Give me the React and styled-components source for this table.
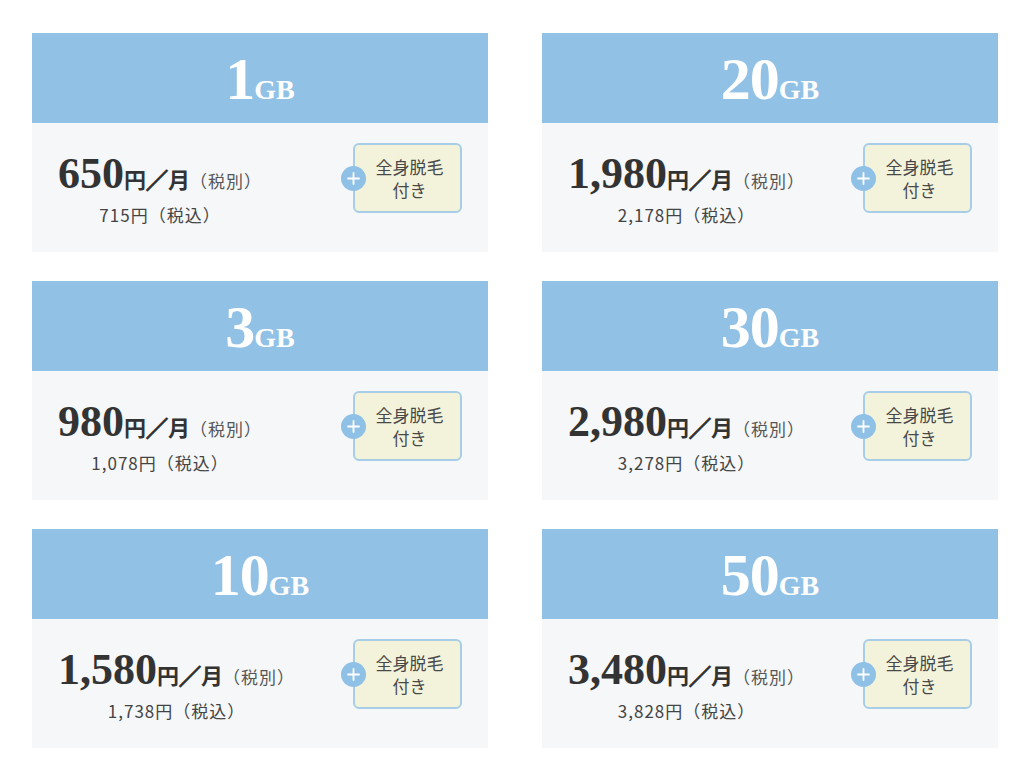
import React from "react";
import styled, { createGlobalStyle } from "styled-components";

const Global = createGlobalStyle`
  html, body { margin: 0; padding: 0; background: #ffffff; }
  body { font-family: "Noto Sans CJK JP", "Noto Sans", sans-serif; color: #333; }
`;

const Page = styled.div`
  width: 1029px;
  box-sizing: border-box;
  padding: 33px 31px 0 32px;
  display: grid;
  grid-template-columns: 456px 456px;
  column-gap: 54px;
  row-gap: 29px;
`;

const Card = styled.section`
  display: flex;
  flex-direction: column;
`;

const Header = styled.div`
  height: 90px;
  box-sizing: border-box;
  padding-top: 3px;
  background: #92c1e6;
  text-align: center;
  color: #ffffff;
  font-family: "Liberation Serif", "DejaVu Serif", serif;
  font-weight: bold;
  font-size: 60px;
  line-height: 86px;
  white-space: nowrap;
`;

const Capacity = styled.span`
  letter-spacing: -1px;
`;

const Unit = styled.span`
  font-size: 28px;
  line-height: 1;
`;

const Body = styled.div`
  height: 129px;
  background: #f5f7f9;
  box-sizing: border-box;
  padding: 20px 26px 0 26px;
  display: flex;
  justify-content: space-between;
  align-items: flex-start;
`;

const PriceBlock = styled.div`
  display: flex;
  flex-direction: column;
  align-items: center;
  margin-top: 9px;
`;

const PriceLine = styled.div`
  display: flex;
  align-items: baseline;
  line-height: 1;
  white-space: nowrap;
`;

const Amount = styled.span`
  font-family: "Liberation Serif", "DejaVu Serif", serif;
  font-weight: bold;
  font-size: 44px;
  color: #333;
`;

const PerMonth = styled.span`
  font-family: "Noto Sans CJK JP", sans-serif;
  font-weight: bold;
  font-size: 22px;
  color: #333;
`;

const Slash = styled.span`
  -webkit-text-stroke: 1.2px #333;
`;

const TaxNote = styled.span`
  font-family: "Noto Sans CJK JP", sans-serif;
  font-size: 17px;
  letter-spacing: 1px;
  color: #555;
`;

const TaxIncl = styled.div`
  font-family: "Noto Sans CJK JP", sans-serif;
  font-size: 17px;
  letter-spacing: 1px;
  color: #444;
  line-height: 1;
  margin-top: 10px;
  white-space: nowrap;
`;

const Badge = styled.div`
  position: relative;
  width: 109px;
  height: 70px;
  box-sizing: border-box;
  background: #f3f3dc;
  border: 2px solid #a8cde9;
  border-radius: 6px;
  display: flex;
  align-items: center;
  justify-content: center;
  text-align: center;
  font-size: 17px;
  line-height: 23px;
  color: #484848;
  padding-left: 4px;
`;

const Plus = styled.span`
  position: absolute;
  left: -14px;
  top: 50%;
  width: 25px;
  height: 25px;
  margin-top: -12px;
  border-radius: 50%;
  background: #8fc0e6;
  display: flex;
  align-items: center;
  justify-content: center;
`;

const plans = [
  { cap: "1", price: "650", incl: "715" },
  { cap: "20", price: "1,980", incl: "2,178" },
  { cap: "3", price: "980", incl: "1,078" },
  { cap: "30", price: "2,980", incl: "3,278" },
  { cap: "10", price: "1,580", incl: "1,738" },
  { cap: "50", price: "3,480", incl: "3,828" },
];

export default function App() {
  return (
    <>
      <Global />
      <Page>
        {plans.map((p) => (
          <Card key={p.cap}>
            <Header>
              <Capacity>{p.cap}</Capacity>
              <Unit>GB</Unit>
            </Header>
            <Body>
              <PriceBlock>
                <PriceLine>
                  <Amount>{p.price}</Amount>
                  <PerMonth>
                    円<Slash>／</Slash>月
                  </PerMonth>
                  <TaxNote>（税別）</TaxNote>
                </PriceLine>
                <TaxIncl>{p.incl}円（税込）</TaxIncl>
              </PriceBlock>
              <Badge>
                <Plus>
                  <svg width="13" height="13" viewBox="0 0 13 13">
                    <path d="M6.5 1v11M1 6.5h11" stroke="#fff" strokeWidth="1.8" strokeLinecap="round" />
                  </svg>
                </Plus>
                <span>
                  全身脱毛
                  <br />
                  付き
                </span>
              </Badge>
            </Body>
          </Card>
        ))}
      </Page>
    </>
  );
}
